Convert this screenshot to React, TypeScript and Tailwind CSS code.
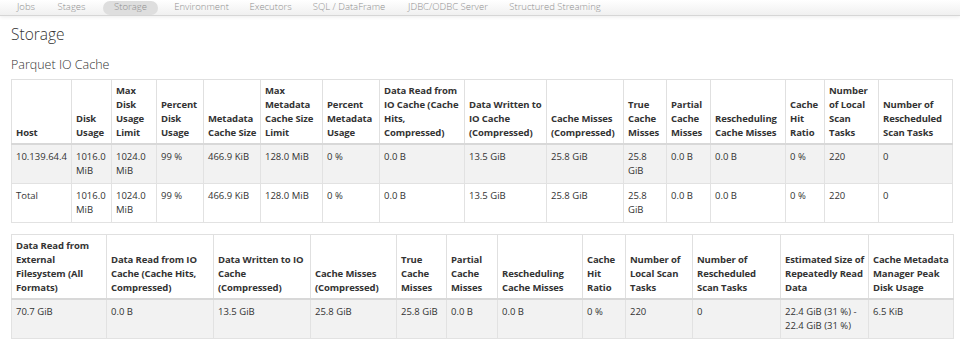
const NAV = [
  { label: "Jobs", w: "w-[42px] ml-[5px]" },
  { label: "Stages", w: "w-[49px]" },
  { label: "Storage", w: "w-[55px] ml-[7px]", active: true },
  { label: "Environment", w: "w-[87px]" },
  { label: "Executors", w: "w-[51px]" },
  { label: "SQL / DataFrame", w: "w-[106px]" },
  { label: "JDBC/ODBC Server", w: "w-[92px]" },
  { label: "Structured Streaming", w: "w-[122px]" },
];

const HOST_COLS = [60, 40, 45, 47, 57, 62, 57, 85, 82, 77, 43, 44, 75, 39, 54, 74];
const HOST_HEAD = [
  "Host",
  "Disk\nUsage",
  "Max\nDisk\nUsage\nLimit",
  "Percent\nDisk\nUsage",
  "Metadata\nCache Size",
  "Max\nMetadata\nCache Size\nLimit",
  "Percent\nMetadata\nUsage",
  "Data Read from\nIO Cache (Cache\nHits,\nCompressed)",
  "Data Written to\nIO Cache\n(Compressed)",
  "Cache Misses\n(Compressed)",
  "True\nCache\nMisses",
  "Partial\nCache\nMisses",
  "Rescheduling\nCache Misses",
  "Cache\nHit\nRatio",
  "Number\nof Local\nScan\nTasks",
  "Number of\nRescheduled\nScan Tasks",
];
const rest = ["1016.0\nMiB", "1024.0\nMiB", "99 %", "466.9 KiB", "128.0 MiB", "0 %", "0.0 B", "13.5 GiB", "25.8 GiB", "25.8\nGiB", "0.0 B", "0.0 B", "0 %", "220", "0"];
const HOST_ROWS = [["10.139.64.4", ...rest], ["Total", ...rest]];

const SUM_COLS = [95, 107, 97, 86, 50, 51, 85, 43, 67, 88, 88, 85];
const SUM_HEAD = [
  "Data Read from\nExternal\nFilesystem (All\nFormats)",
  "Data Read from IO\nCache (Cache Hits,\nCompressed)",
  "Data Written to IO\nCache\n(Compressed)",
  "Cache Misses\n(Compressed)",
  "True\nCache\nMisses",
  "Partial\nCache\nMisses",
  "Rescheduling\nCache Misses",
  "Cache\nHit\nRatio",
  "Number of\nLocal Scan\nTasks",
  "Number of\nRescheduled\nScan Tasks",
  "Estimated Size of\nRepeatedly Read\nData",
  "Cache Metadata\nManager Peak\nDisk Usage",
];
const SUM_ROWS = [
  ["70.7 GiB", "0.0 B", "13.5 GiB", "25.8 GiB", "25.8 GiB", "0.0 B", "0.0 B", "0 %", "220", "0", "22.4 GiB (31 %) -\n22.4 GiB (31 %)", "6.5 KiB"],
];

function CacheTable({ cols, head, rows }: { cols: number[]; head: string[]; rows: string[][] }) {
  return (
    <table className="w-[942px] table-fixed border-collapse text-[9.5px] leading-[14px] text-[#333]">
      <colgroup>
        {cols.map((w, i) => (
          <col key={i} style={{ width: w }} />
        ))}
      </colgroup>
      <thead>
        <tr>
          {head.map((h, i) => (
            <th
              key={i}
              className="whitespace-pre border border-b-2 border-[#e0e0e0] border-b-[#d8d8d8] px-[4px] pb-[3px] pt-[4px] text-left align-bottom font-bold tracking-[-0.1px]"
            >
              {h}
            </th>
          ))}
        </tr>
      </thead>
      <tbody>
        {rows.map((row, r) => (
          <tr key={r} className={r % 2 === 0 ? "bg-[#f2f2f2]" : "bg-white"}>
            {row.map((c, i) => (
              <td key={i} className="whitespace-pre border border-[#e2e2e2] px-[4px] py-[5px] align-top">
                {c}
              </td>
            ))}
          </tr>
        ))}
      </tbody>
    </table>
  );
}

export default function App() {
  return (
    <div className="h-[341px] w-[960px] overflow-hidden bg-white font-['Open_Sans',sans-serif]">
      <nav className="flex h-[16px] items-center border-b border-[#d6d6d6] bg-gradient-to-b from-white to-[#f0f0f0] shadow-[0_1px_4px_rgba(0,0,0,0.08)]">
        {NAV.map((n) => (
          <span
            key={n.label}
            className={`${n.w} flex h-[14px] shrink-0 items-center justify-center whitespace-nowrap rounded-full text-[9.5px] font-light text-[#8f8f8f] ${
              n.active ? "bg-[#dedede]" : ""
            }`}
          >
            {n.label}
          </span>
        ))}
      </nav>

      <div className="px-[11px]">
        <h3 className="mt-[7px] text-[15.5px] font-light leading-[22px] text-[#333]">Storage</h3>
        <h4 className="mt-[11px] text-[12.5px] font-light leading-[18px] text-[#333]">Parquet IO Cache</h4>
        <div className="mt-[5px]">
          <CacheTable cols={HOST_COLS} head={HOST_HEAD} rows={HOST_ROWS} />
        </div>
        <div className="mt-[11px]">
          <CacheTable cols={SUM_COLS} head={SUM_HEAD} rows={SUM_ROWS} />
        </div>
      </div>
    </div>
  );
}
